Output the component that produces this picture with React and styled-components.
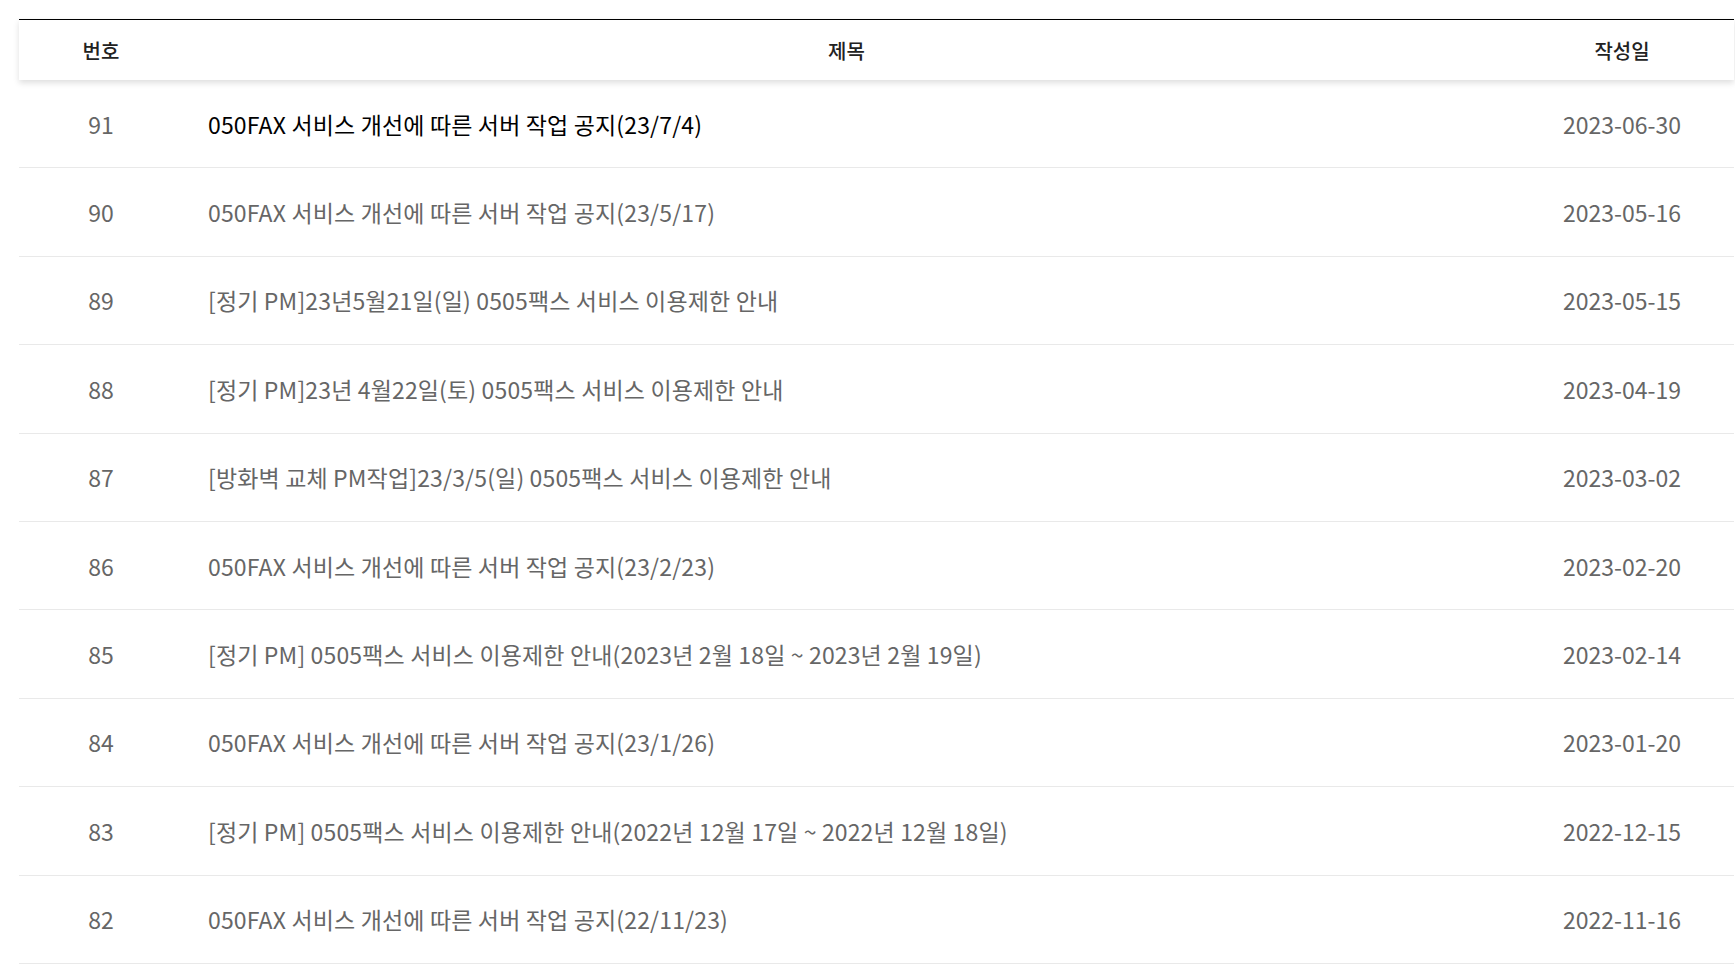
import React from "react";
import styled, { createGlobalStyle } from "styled-components";

const GlobalStyle = createGlobalStyle`
  html, body { margin: 0; padding: 0; background: #fff; }
  body {
    font-family: "Noto Sans CJK KR", "Noto Sans", sans-serif;
    overflow: hidden;
  }
`;

const Page = styled.div`
  padding: 19px 0 0 19px;
`;

const Table = styled.div`
  width: 1715px;
  display: flex;
  flex-direction: column;
`;

const HeaderRow = styled.div`
  display: grid;
  grid-template-columns: 164px 1327px 224px;
  height: 60px;
  border-top: 1px solid #000;
  background: #fff;
  box-shadow: 0 3px 6px rgba(0, 0, 0, 0.13);
  position: relative;
  z-index: 1;
`;

const HeaderCell = styled.div`
  display: flex;
  align-items: center;
  justify-content: center;
  font-size: 20px;
  font-weight: 500;
  color: #222;
`;

const Row = styled.div`
  display: grid;
  grid-template-columns: 164px 1327px 224px;
  height: 88.4px;
  box-sizing: border-box;
  border-bottom: 1px solid #e9e9e9;
`;

const Cell = styled.div`
  display: flex;
  align-items: center;
  justify-content: ${(p) => (p.$left ? "flex-start" : "center")};
  padding-left: ${(p) => (p.$left ? "25px" : "0")};
  font-size: 23px;
  letter-spacing: ${(p) => (p.$left ? "0.15px" : "0")};
  font-weight: 400;
  color: ${(p) => (p.$dark ? "#000" : "#666")};
  white-space: nowrap;
`;

const rows = [
  ["91", "050FAX 서비스 개선에 따른 서버 작업 공지(23/7/4)", "2023-06-30"],
  ["90", "050FAX 서비스 개선에 따른 서버 작업 공지(23/5/17)", "2023-05-16"],
  ["89", "[정기 PM]23년5월21일(일) 0505팩스 서비스 이용제한 안내", "2023-05-15"],
  ["88", "[정기 PM]23년 4월22일(토) 0505팩스 서비스 이용제한 안내", "2023-04-19"],
  ["87", "[방화벽 교체 PM작업]23/3/5(일) 0505팩스 서비스 이용제한 안내", "2023-03-02"],
  ["86", "050FAX 서비스 개선에 따른 서버 작업 공지(23/2/23)", "2023-02-20"],
  ["85", "[정기 PM] 0505팩스 서비스 이용제한 안내(2023년 2월 18일 ~ 2023년 2월 19일)", "2023-02-14"],
  ["84", "050FAX 서비스 개선에 따른 서버 작업 공지(23/1/26)", "2023-01-20"],
  ["83", "[정기 PM] 0505팩스 서비스 이용제한 안내(2022년 12월 17일 ~ 2022년 12월 18일)", "2022-12-15"],
  ["82", "050FAX 서비스 개선에 따른 서버 작업 공지(22/11/23)", "2022-11-16"],
];

export default function App() {
  return (
    <>
      <GlobalStyle />
      <Page>
        <Table>
          <HeaderRow>
            <HeaderCell>번호</HeaderCell>
            <HeaderCell>제목</HeaderCell>
            <HeaderCell>작성일</HeaderCell>
          </HeaderRow>
          {rows.map(([no, title, date], i) => (
            <Row key={no}>
              <Cell>{no}</Cell>
              <Cell $left $dark={i === 0}>{title}</Cell>
              <Cell>{date}</Cell>
            </Row>
          ))}
        </Table>
      </Page>
    </>
  );
}
